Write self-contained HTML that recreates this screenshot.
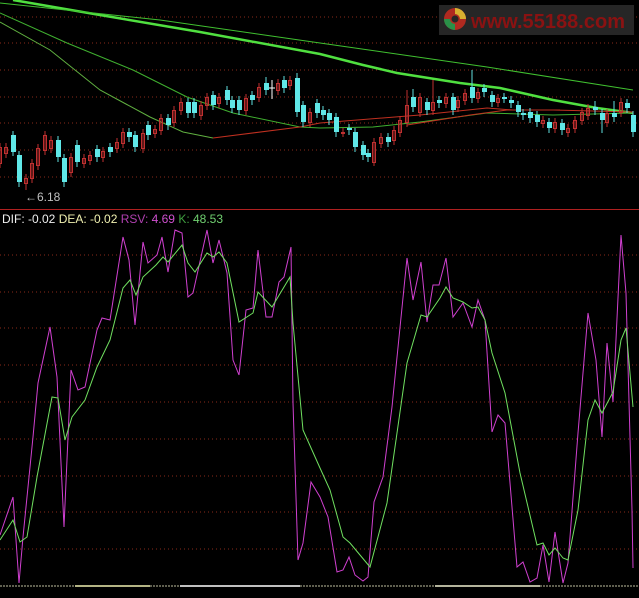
<!DOCTYPE html>
<html><head><meta charset="utf-8"><style>
html,body{margin:0;padding:0;background:#000;width:639px;height:598px;overflow:hidden}
svg{position:absolute;left:0;top:0}
.t{font-family:"Liberation Sans",sans-serif;font-size:12px}
</style></head><body>
<svg width="639" height="598" viewBox="0 0 639 598">
<rect width="639" height="598" fill="#000"/>
<g stroke="#8a2a1a" stroke-width="1" stroke-dasharray="1,3">
<path d="M0 17H639M0 43H639M0 70H639M0 97H639M0 123H639M0 150H639M0 177H639"/>
<path d="M0 255H639M0 292H639M0 328H639M0 365H639M0 402H639M0 439H639M0 476H639M0 512H639M0 549H639"/>
</g>
<line x1="0" y1="209.5" x2="639" y2="209.5" stroke="#b02020"/>
<!-- logo -->
<rect x="439" y="5" width="195" height="30" fill="#262626"/>
<circle cx="455" cy="19" r="11" fill="#b02a20"/>
<path d="M455 8 A11 11 0 0 1 466 19 L460 19 A5 5 0 0 0 455 14Z" fill="#d8b030"/>
<path d="M444 19 A11 11 0 0 0 455 30 L455 24 A5 5 0 0 1 450 19Z" fill="#2a9048"/>
<circle cx="455" cy="19" r="3.5" fill="#262626"/>
<text x="471" y="28" font-family="Liberation Sans,sans-serif" font-weight="bold" font-size="20" fill="#8a1212" textLength="154" lengthAdjust="spacingAndGlyphs">www.55188.com</text>
<!-- MAs -->
<g fill="none">
<polyline stroke="#50e040" stroke-width="2.5" points="13,0 100,15 200,32 320,54 363,65 397,73 460,83 500,88 553,100 597,108 633,113"/>
<polyline stroke="#40c030" stroke-width="1" points="0,3 160,20 320,43 487,67 633,90"/>
<polyline stroke="#40b030" stroke-width="1" points="0,13 67,43 133,70 187,97 233,113 300,127 320,128 373,127 420,122 487,113 553,115 633,113"/>
<polyline stroke="#60b040" stroke-width="1" points="0,22 50,50 100,90 150,117 183,132 213,138"/>
<polyline stroke="#c03020" stroke-width="1" points="213,138 300,127 320,123 420,115 487,108 513,110 553,110 633,112"/>
<polyline stroke="#c03020" stroke-width="1" points="407,125 470,115 507,110 560,110"/>
</g>
<!-- wicks -->
<path stroke="#c03030" stroke-width="1" fill="none" d="M0 143V168M6 143V158M26 174V190M32 159V183M38 144V170M45 131V155M51 136V153M71 153V177M84 154V168M90 151V165M103 147V162M117 138V153M123 128V148M143 129V153M155 125V138M161 114V135M174 106V127M181 98V115M201 101V120M207 93V110M219 93V108M246 94V115M259 83V102M278 79V95M290 76V90M310 108V127M343 128V137M374 138V166M381 133V148M394 126V145M400 116V137M407 90V127M420 93V117M433 80V115M446 93V108M458 96V112M465 89V105M478 88V103M498 94V107M543 116V128M555 118V133M568 124V137M575 116V133M582 108V125M588 104V120M607 109V127M621 98V117"/>
<path stroke="#60e0e0" stroke-width="1" fill="none" d="M13 131V156M19 151V187M58 136V162M64 154V187M77 140V167M97 145V162M110 143V157M129 128V142M135 131V152M148 121V140M168 114V130M188 98V118M194 98V118M213 91V110M227 86V105M232 96V113M239 96V115M252 91V105M266 77V95M284 76V93M297 73V117M303 101V127M317 99V118M323 106V120M329 109V125M336 113V137M349 124V135M355 128V152M363 141V160M368 149V162M388 133V147M413 89V112M427 98V115M439 96V108M453 93V115M472 70V103M484 84V97M492 91V107M504 93V103M511 96V108M518 101V117M523 109V120M530 108V123M537 111V127M549 118V133M562 119V135M595 101V115M602 109V133M614 101V122M627 99V113M633 111V137"/>
<path stroke="#fff" stroke-width="1" d="M272 80V99M269 88H275"/>
<g fill="none" stroke="#c03030" stroke-width="1">
<rect x="-1.5" y="147.5" width="3" height="16"/><rect x="4.5" y="147.5" width="3" height="6"/><rect x="24.5" y="178.5" width="3" height="5"/><rect x="30.5" y="163.5" width="3" height="15"/><rect x="36.5" y="148.5" width="3" height="17"/><rect x="43.5" y="135.5" width="3" height="15"/><rect x="49.5" y="140.5" width="3" height="8"/><rect x="69.5" y="157.5" width="3" height="15"/><rect x="82.5" y="158.5" width="3" height="5"/><rect x="88.5" y="155.5" width="3" height="5"/><rect x="101.5" y="151.5" width="3" height="6"/><rect x="115.5" y="142.5" width="3" height="6"/><rect x="121.5" y="132.5" width="3" height="11"/><rect x="141.5" y="133.5" width="3" height="15"/><rect x="153.5" y="129.5" width="3" height="4"/><rect x="159.5" y="118.5" width="3" height="12"/><rect x="172.5" y="110.5" width="3" height="12"/><rect x="179.5" y="102.5" width="3" height="8"/><rect x="199.5" y="105.5" width="3" height="10"/><rect x="205.5" y="97.5" width="3" height="8"/><rect x="217.5" y="97.5" width="3" height="6"/><rect x="244.5" y="98.5" width="3" height="12"/><rect x="257.5" y="87.5" width="3" height="10"/><rect x="276.5" y="83.5" width="3" height="7"/><rect x="288.5" y="80.5" width="3" height="5"/><rect x="308.5" y="112.5" width="3" height="10"/><rect x="341.5" y="132.5" width="3" height="1"/><rect x="372.5" y="142.5" width="3" height="20"/><rect x="379.5" y="137.5" width="3" height="6"/><rect x="392.5" y="130.5" width="3" height="10"/><rect x="398.5" y="120.5" width="3" height="12"/><rect x="405.5" y="105.5" width="3" height="17"/><rect x="418.5" y="97.5" width="3" height="15"/><rect x="431.5" y="102.5" width="3" height="8"/><rect x="444.5" y="97.5" width="3" height="6"/><rect x="456.5" y="100.5" width="3" height="7"/><rect x="463.5" y="93.5" width="3" height="7"/><rect x="476.5" y="92.5" width="3" height="6"/><rect x="496.5" y="98.5" width="3" height="4"/><rect x="541.5" y="120.5" width="3" height="3"/><rect x="553.5" y="122.5" width="3" height="6"/><rect x="566.5" y="128.5" width="3" height="4"/><rect x="573.5" y="120.5" width="3" height="8"/><rect x="580.5" y="112.5" width="3" height="8"/><rect x="586.5" y="108.5" width="3" height="7"/><rect x="605.5" y="113.5" width="3" height="9"/><rect x="619.5" y="102.5" width="3" height="10"/>
</g>
<g fill="#60e8e8">
<rect x="11" y="135" width="5" height="17"/><rect x="17" y="155" width="5" height="27"/><rect x="56" y="140" width="5" height="17"/><rect x="62" y="158" width="5" height="24"/><rect x="75" y="145" width="5" height="17"/><rect x="95" y="149" width="5" height="8"/><rect x="108" y="147" width="5" height="5"/><rect x="127" y="132" width="5" height="5"/><rect x="133" y="135" width="5" height="12"/><rect x="146" y="125" width="5" height="10"/><rect x="166" y="118" width="5" height="7"/><rect x="186" y="102" width="5" height="11"/><rect x="192" y="102" width="5" height="11"/><rect x="211" y="95" width="5" height="10"/><rect x="225" y="90" width="5" height="10"/><rect x="230" y="100" width="5" height="8"/><rect x="237" y="100" width="5" height="10"/><rect x="250" y="95" width="5" height="5"/><rect x="264" y="83" width="5" height="7"/><rect x="282" y="80" width="5" height="8"/><rect x="295" y="78" width="5" height="34"/><rect x="301" y="105" width="5" height="17"/><rect x="315" y="103" width="5" height="10"/><rect x="321" y="110" width="5" height="5"/><rect x="327" y="113" width="5" height="7"/><rect x="334" y="117" width="5" height="15"/><rect x="347" y="128" width="5" height="2"/><rect x="353" y="132" width="5" height="15"/><rect x="361" y="145" width="5" height="10"/><rect x="366" y="153" width="5" height="4"/><rect x="386" y="137" width="5" height="5"/><rect x="411" y="97" width="5" height="10"/><rect x="425" y="102" width="5" height="8"/><rect x="437" y="100" width="5" height="3"/><rect x="451" y="97" width="5" height="13"/><rect x="470" y="87" width="5" height="11"/><rect x="482" y="88" width="5" height="4"/><rect x="490" y="95" width="5" height="7"/><rect x="502" y="97" width="5" height="2"/><rect x="509" y="100" width="5" height="3"/><rect x="516" y="105" width="5" height="7"/><rect x="521" y="113" width="5" height="2"/><rect x="528" y="112" width="5" height="6"/><rect x="535" y="115" width="5" height="7"/><rect x="547" y="122" width="5" height="6"/><rect x="560" y="123" width="5" height="7"/><rect x="593" y="107" width="5" height="3"/><rect x="600" y="113" width="5" height="7"/><rect x="612" y="113" width="5" height="4"/><rect x="625" y="103" width="5" height="5"/><rect x="631" y="115" width="5" height="17"/>
</g>
<text x="25" y="201" class="t" fill="#c0c0c0">←6.18</text>
<text x="2" y="223" class="t"><tspan fill="#f0f0f0">DIF: -0.02 </tspan><tspan fill="#f0f0b0">DEA: -0.02 </tspan><tspan fill="#b040b0">RSV: </tspan><tspan fill="#d050d0">4.69 </tspan><tspan fill="#40a040">K: </tspan><tspan fill="#70d070">48.53</tspan></text>
<g fill="none" stroke-width="1">
<polyline stroke="#d040d0" points="0,535 13,497 19,583 23,537 33,437 38,383 50,327 57,377 64,527 71,370 78,390 85,387 97,330 102,318 110,320 123,237 129,260 135,325 143,242 148,263 157,255 162,237 168,272 175,230 182,233 188,297 193,293 207,230 213,263 219,240 227,273 233,360 239,375 246,310 253,308 258,250 266,317 272,317 279,282 284,277 291,247 293,403 298,560 303,543 311,482 320,497 328,517 337,572 343,570 349,557 355,575 363,581 368,577 374,502 383,477 392,407 407,258 413,300 421,262 427,322 433,285 439,285 446,258 453,317 463,303 472,327 478,300 485,320 492,432 498,415 505,423 517,567 523,562 530,582 537,578 543,545 549,582 555,532 563,583 568,563 578,433 588,313 596,360 602,437 607,343 613,402 621,235 626,293 632,510 633,568"/>
<polyline stroke="#70e060" points="0,540 13,520 20,542 27,537 37,477 52,397 58,398 65,440 72,417 85,400 97,367 110,340 123,288 130,280 136,295 143,277 156,265 163,257 168,262 182,245 188,263 195,272 207,253 213,257 219,252 227,263 239,322 253,313 258,292 272,307 290,277 293,323 303,430 320,468 330,490 343,537 350,543 370,567 387,503 407,363 421,315 427,317 440,298 446,287 453,298 463,302 472,308 478,307 485,320 492,353 505,393 520,473 537,545 543,543 549,555 555,548 563,558 568,560 578,510 588,420 595,400 602,413 613,392 621,340 626,328 633,407"/>
</g>
<line x1="0" y1="586" x2="639" y2="586" stroke="#c0c0a0" stroke-dasharray="2,1"/>
<line x1="75" y1="586" x2="150" y2="586" stroke="#f0f0b0" stroke-width="1.5"/>
<line x1="180" y1="586" x2="300" y2="586" stroke="#ffffff" stroke-width="1.5"/>
<line x1="435" y1="586" x2="540" y2="586" stroke="#f0f0d0" stroke-width="1.5"/>
</svg>
</body></html>
